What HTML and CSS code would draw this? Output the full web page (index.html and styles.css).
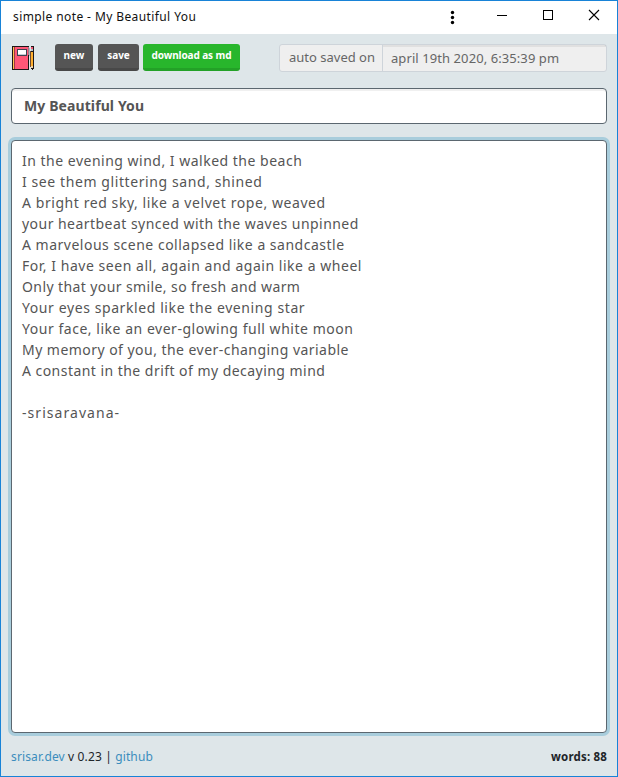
FILE: index.html
```
<!DOCTYPE html>
<html lang="en">
<head>
<meta charset="utf-8">
<title>simple note - My Beautiful You</title>
<link rel="stylesheet" href="styles.css">
</head>
<body>
<div class="window">
  <header class="titlebar">
    <span class="caption">simple note - My Beautiful You</span>
    <svg class="controls" width="160" height="33" viewBox="0 0 160 33" shape-rendering="crispEdges" aria-hidden="true">
      <g shape-rendering="auto"><circle cx="5.5" cy="11.5" r="1.7"/><circle cx="5.5" cy="16.500" r="1.7"/><circle cx="5.5" cy="21.5" r="1.7"/></g>
      <path d="M50 14h10v1H50z"/>
      <path d="M96.500 9.500h9v9h-9z" fill="none" stroke="#000"/>
      <path d="M142 9l10 10M152 9l-10 10" fill="none" stroke="#000" stroke-width="1.1" shape-rendering="auto"/>
    </svg>
  </header>
  <main class="app">
    <div class="toolbar">
      <svg class="logo" width="23" height="25" viewBox="0 0 23 25" shape-rendering="crispEdges" aria-hidden="true">
        <path d="M0 0h17v24H0z" fill="#1d1718"/>
        <path d="M1 1h1v22H1z" fill="#ffc34d"/>
        <path d="M3 1h13v22H3z" fill="#ff5777"/>
        <path d="M2 1h1v22H2z" fill="#9b3945"/>
        <path d="M5 3h10v7H5z" fill="#3d4350"/>
        <path d="M6 4h8v4H6z" fill="#fff"/>
        <path d="M6 8h8v1H6z" fill="#c5cbd5"/>
        <path d="M16 1h1v8h-1z" fill="#9b7a86"/>
        <path d="M17 2h1v8h-1z" fill="#aab4bb"/>
        <path d="M19 0h3v22l-1 2h-1l-1-2z" fill="#1d1718"/>
        <path d="M19 1h2v2h-2z" fill="#f25773"/>
        <path d="M19 3h2v2h-2z" fill="#b7c1ca"/>
        <path d="M19 6h2v14h-2z" fill="#ffaf2e"/>
        <path d="M18 5h1v16h-1z" fill="#6b4a32"/>
        <path d="M19 20h2v2h-2z" fill="#f3d4a9"/>
      </svg>
      <button class="btn new">new</button>
      <button class="btn save">save</button>
      <button class="btn download">download as md</button>
      <div class="saved"><span class="label">auto saved on</span><span class="stamp">april 19th 2020, 6:35:39 pm</span></div>
    </div>
    <div class="note-title"><span>My Beautiful You</span></div>
    <div class="note">
      <div class="l1">In the evening wind, I walked the beach</div>
      <div class="l2">I see them glittering sand, shined</div>
      <div class="l3">A bright red sky, like a velvet rope, weaved</div>
      <div class="l4">your heartbeat synced with the waves unpinned</div>
      <div class="l5">A marvelous scene collapsed like a sandcastle</div>
      <div class="l6">For, I have seen all, again and again like a wheel</div>
      <div class="l7">Only that your smile, so fresh and warm</div>
      <div class="l8">Your eyes sparkled like the evening star</div>
      <div class="l9">Your face, like an ever-glowing full white moon</div>
      <div class="l10">My memory of you, the ever-changing variable</div>
      <div class="l11">A constant in the drift of my decaying mind</div>
      <div><br></div>
      <div class="l13">-srisaravana-</div>
    </div>
    <footer class="footer">
      <span class="about"><a>srisar.dev</a> v 0.23 | <a>github</a></span>
      <b class="words">words: 88</b>
    </footer>
  </main>
</div>
</body>
</html>
```
FILE: styles.css
```
* { box-sizing: border-box; }
body { margin: 0; font-family: "Noto Sans", sans-serif; color: #212529; }
.window { width: 618px; height: 777px; border: 1px solid #1883d7; background: #dee6e9; display: flex; flex-direction: column; }
.titlebar { height: 33px; flex: none; background: #fff; display: flex; justify-content: space-between; padding: 0 10px 0 12px; color: #111; }
.caption { font-size: 12px; line-height: 32px; letter-spacing: .4px; white-space: nowrap; }
.controls { flex: none; }
.app { flex: 1; display: flex; flex-direction: column; padding: 10px 10px 0; }
.toolbar { display: flex; height: 28px; }
.logo { margin: 2px 20px 0 1px; flex: none; }
.btn { height: 27px; flex: none; border: 0; border-bottom: 3px solid #484848; border-radius: 3px; background: #555; color: #fff; font: bold 10px/23px "Noto Sans", sans-serif; padding: 0 0 1px; margin-right: 5px; white-space: nowrap; }
.new { width: 38px; }
.save { width: 41px; margin-right: 4px; }
.download { width: 97px; margin: 0; background: #28b62c; border-color: #23a127; letter-spacing: -.1px; }
.saved { width: 328px; height: 28px; margin-left: auto; display: flex; border: 1px solid #ced4da; border-radius: 3px; background: #efefef; color: #666; font-size: 13px; white-space: nowrap; }
.label { width: 103px; padding-left: 9px; line-height: 25px; border-right: 1px solid #ced4da; }
.stamp { flex: 1; padding-left: 8px; line-height: 27px; letter-spacing: .08px; box-shadow: inset 0 2px 0 rgba(0,0,0,.06); }
.note-title { height: 36px; margin-top: 16px; border: 1px solid #5b6770; border-radius: 4px; background: #fff; box-shadow: inset 0 2px 0 rgba(0,0,0,.06); padding-left: 12px; font-size: 14px; font-weight: bold; line-height: 34px; letter-spacing: .1px; color: #555; }
.note { height: 593px; margin-top: 16px; border: 1px solid #5b6770; border-radius: 4px; background: #fff; box-shadow: 0 0 0 3px #a8cddc; padding: 9px 10px; font-size: 14px; line-height: 21px; letter-spacing: .5px; color: #555; white-space: nowrap; }
.l2, .l8 { letter-spacing: .59px; }
.l3 { letter-spacing: .57px; }
.l4, .l10, .l11 { letter-spacing: .46px; }
.l6, .l9 { letter-spacing: .53px; }
.l7 { letter-spacing: .4px; }
.l13 { letter-spacing: 1.05px; }
.footer { display: flex; justify-content: space-between; margin-top: 14px; font-size: 12px; line-height: 19px; letter-spacing: .13px; }
.footer a { color: #3b8dbd; }
.words { font-size: 11.5px; letter-spacing: .18px; }
```
